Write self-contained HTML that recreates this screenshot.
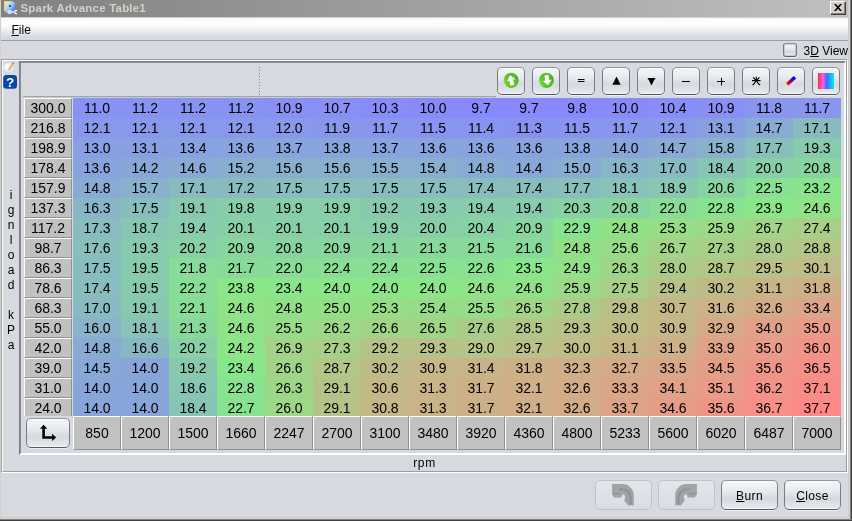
<!DOCTYPE html>
<html lang="en"><head><meta charset="utf-8"><title>Spark Advance Table1</title>
<style>
html,body{margin:0;padding:0}
body{width:852px;height:521px;overflow:hidden;position:relative;background:#d6d9df;font-family:"Liberation Sans",sans-serif;color:#000}
#root{position:absolute;left:0;top:0;width:852px;height:521px;will-change:transform}
.abs{position:absolute}
#frameL{left:0;top:0;width:1px;height:521px;background:#d4d0c8}
#frameR{left:848px;top:0;width:4px;height:519px;background:linear-gradient(90deg,#d4d0c8 0,#d4d0c8 2px,#808080 2px,#808080 3px,#404040 3px)}
#frameB{left:0;top:517px;width:852px;height:4px;background:linear-gradient(180deg,#d4d0c8 0,#d4d0c8 2px,#808080 2px,#808080 3px,#404040 3px)}
#title{left:1px;top:0;width:847px;height:17px;background:linear-gradient(90deg,#808080,#c0c0c0)}
#titleline{left:1px;top:17px;width:847px;height:1px;background:#d4d0c8}
#title .txt{position:absolute;left:19.5px;top:0;height:16px;line-height:16px;font-size:11.5px;letter-spacing:.2px;font-weight:bold;color:#d4d0c8;white-space:nowrap}
#closebtn{left:830px;top:1px;width:16px;height:14px;background:#d4d0c8;box-sizing:border-box;border:1px solid;border-color:#fff #404040 #404040 #fff;box-shadow:inset -1px -1px 0 #808080}
#menu{left:1px;top:18px;width:847px;height:22px;background:linear-gradient(180deg,#f6f7f9 0,#fefefe 18%,#fcfcfd 32%,#eeeff2 55%,#e0e2e7 72%,#d7dae1 86%,#d5d8e0 100%)}
#menuline{left:1px;top:40px;width:847px;height:1px;background:#9aa0ad}
#menu .txt{position:absolute;left:10.5px;top:0;height:23px;line-height:24px;font-size:12px}
u{text-decoration:underline;text-underline-offset:1px}
#cb{left:783px;top:43px;width:14px;height:14px;box-sizing:border-box;border:1px solid;border-color:#8b909b #747984 #595d67 #747984;border-radius:3px;background:linear-gradient(180deg,#f5f6f8 0,#eceef1 25%,#e3e5ea 44%,#d9dce2 56%,#d7dae0 66%,#e0e3e8 86%,#ecedf1 100%);box-shadow:inset 0 0 0 .5px rgba(120,125,136,.55),0 1px 0 rgba(255,255,255,.5)}
#cbtxt{left:803.5px;top:43px;height:16px;line-height:16px;font-size:12px;white-space:nowrap}
#outer{left:1px;top:59px;width:847px;height:414px;box-sizing:border-box;border:1px solid;border-color:#9a9da3 #fff #fff #9a9da3}
#outer:before{content:"";position:absolute;left:0;top:0;right:0;bottom:0;border:1px solid;border-color:#fff #9a9da3 #9a9da3 #fff}
#inner{left:19px;top:61px;width:827px;height:394px;box-sizing:border-box;border:1px solid;border-color:#7b7d81 #fff #fff #7b7d81}
#inner:before{content:"";position:absolute;left:0;top:0;right:0;bottom:0;border:1px solid;border-color:#8c8e93 #fbfbfc #fbfbfc #8c8e93}
.vtxt{left:4px;top:188px;width:14px;font-size:12px;line-height:15px;text-align:center}
.vtxt span{display:block;height:15px}
#sepline{left:23px;top:96px;width:473px;height:1px;background:#a2a4a9}
#sepline2{left:23px;top:97px;width:473px;height:1px;background:#c8cbd1}
#dots{left:259px;top:67px;width:1px;height:29px;background:repeating-linear-gradient(180deg,#83858c 0,#83858c 1px,transparent 1px,transparent 3px)}
.tb{position:absolute;top:67px;width:28px;height:28px;box-sizing:border-box;border:1px solid;border-color:#9196a0 #787c86 #555962 #787c86;border-radius:5px;background:linear-gradient(180deg,#f5f6f8 0,#eceef1 25%,#e3e5ea 44%,#d9dce2 56%,#d7dae0 66%,#e0e3e8 86%,#ecedf1 100%);box-shadow:0 1px 0 rgba(255,255,255,.55),inset 0 -1px 0 rgba(255,255,255,.45),inset 0 1px 0 rgba(255,255,255,.5)}
.tb svg{position:absolute;left:0;top:0}
.btn{position:absolute;top:480px;width:57px;height:30px;box-sizing:border-box;border:1px solid;border-color:#9196a0 #787c86 #555962 #787c86;border-radius:5px;background:linear-gradient(180deg,#f5f6f8 0,#eceef1 25%,#e3e5ea 44%,#d9dce2 56%,#d7dae0 66%,#e0e3e8 86%,#ecedf1 100%);font-size:12px;letter-spacing:.4px;line-height:30px;text-align:center;box-shadow:0 1px 0 rgba(255,255,255,.55),inset 0 -1px 0 rgba(255,255,255,.45),inset 0 1px 0 rgba(255,255,255,.5)}
.btn.dis{border-color:#c0c3ca;background:linear-gradient(180deg,#e4e6eb,#d9dce2);box-shadow:none}
.btn svg{position:absolute;left:0;top:0}
.rowhdrs{position:absolute;left:24px;top:98px;width:48px;height:318px;overflow:hidden}
.rh{position:absolute;left:0;width:48px;height:20px;box-sizing:border-box;border:1px solid;border-color:#fff #909090 #909090 #fff;background:#c1c1c1;font-size:14px;line-height:18px;text-align:center}
.grid{position:absolute;left:73px;top:98px;width:768px;height:318px;overflow:hidden}
.gr{height:20px;white-space:nowrap;font-size:0}
.gr span{display:inline-block;width:48px;height:20px;line-height:20px;font-size:14px;text-align:center}
.colhdrs{position:absolute;left:73px;top:416px;width:768px;height:34px;white-space:nowrap;font-size:0}
.ch{display:inline-block;width:48px;height:34px;box-sizing:border-box;border:1px solid;border-color:#fff #909090 #909090 #fff;background:#c1c1c1;font-size:14px;line-height:32px;text-align:center}
#rpm{left:1px;top:456px;width:847px;height:15px;line-height:15px;font-size:12px;letter-spacing:.6px;text-align:center}
#cornerbtn{left:26px;top:418px;width:44px;height:30px}
</style></head>
<body>
<div id="root">
<div id="title" class="abs">
<svg class="abs" style="left:-1px;top:0" width="20" height="17" viewBox="0 0 20 17">
<defs><linearGradient id="ig" x1="0" y1="0" x2="1" y2="1"><stop offset="0" stop-color="#e4f1ff"/><stop offset=".45" stop-color="#9ccaf8"/><stop offset="1" stop-color="#1c6fd6"/></linearGradient>
<linearGradient id="yg" x1="0" y1="0" x2="1" y2="0"><stop offset="0" stop-color="#f2cf62"/><stop offset=".5" stop-color="#f3e6b4"/><stop offset="1" stop-color="#e9e3cf"/></linearGradient></defs>
<rect x="4" y="1" width="8.300" height="10" fill="url(#yg)"/>
<rect x="4" y="1" width="8.300" height="1" fill="#f0d27a"/>
<rect x="5.600" y="2.200" width="9.200" height="11" fill="url(#ig)"/>
<rect x="9" y="5" width="2" height="2" fill="#1858c0"/>
<path d="M9.200 12.100h6M17 10.600h-1.600l-1 1.500 1 1.500h1.600" stroke="#f4f6f9" stroke-width="1.300" fill="none"/>
<circle cx="9.600" cy="12.100" r="1.500" fill="none" stroke="#e6eaf0" stroke-width="1.200"/>
</svg>
<div class="txt">Spark Advance Table1</div>
</div>
<div id="titleline" class="abs"></div>
<div id="closebtn" class="abs"><svg width="14" height="12" viewBox="0 0 14 12" style="position:absolute;left:0;top:0"><path d="M3 2h2l6 7h-2zM9 2h2l-6 7h-2z" fill="#000"/></svg></div>
<div id="menu" class="abs"><div class="txt"><u>F</u>ile</div></div>
<div id="menuline" class="abs"></div>
<div id="cb" class="abs"></div>
<div id="cbtxt" class="abs">3<u>D</u> View</div>
<div id="outer" class="abs"></div>
<div id="inner" class="abs"></div>
<svg class="abs" style="left:0;top:56px" width="19" height="36" viewBox="0 0 19 36">
<defs><radialGradient id="bg1" cx=".4" cy=".35" r=".7"><stop offset="0" stop-color="#fff"/><stop offset="1" stop-color="#d4e6f2"/></radialGradient></defs>
<ellipse cx="8.800" cy="11.600" rx="5.400" ry="4.500" fill="url(#bg1)"/>
<path d="M9.500 15.500l2.500 1.600-.3-2.600z" fill="#dceaf4"/>
<path d="M9 13.600l3.600-5.200" stroke="#f0aa52" stroke-width="1.900"/>
<path d="M8.500 14.300l.5-1 .6.500z" fill="#8a7a60"/>
<path d="M12.800 8l.8-1.200" stroke="#e8505e" stroke-width="1.600"/>
<rect x="3.200" y="19" width="13.800" height="13.700" rx="3.300" fill="#0848a4"/>
<text x="10.100" y="30.800" font-family="Liberation Sans, sans-serif" font-weight="bold" font-size="13.500" fill="#f4fffb" text-anchor="middle">?</text>
</svg>
<div class="abs vtxt"><span>i</span><span>g</span><span>n</span><span>l</span><span>o</span><span>a</span><span>d</span><span>&nbsp;</span><span>k</span><span>P</span><span>a</span></div>
<div id="sepline" class="abs"></div>
<div id="sepline2" class="abs"></div>
<div id="dots" class="abs"></div>
<div class="tb" style="left:497px"><svg width="26" height="26" viewBox="0 0 26 26"><defs><linearGradient id="gg" x1="0" y1=".7" x2="1" y2=".3"><stop offset="0" stop-color="#b4f08c"/><stop offset=".13" stop-color="#74d242"/><stop offset=".3" stop-color="#5cc62e"/><stop offset=".8" stop-color="#54be28"/><stop offset="1" stop-color="#3c9a18"/></linearGradient></defs><circle cx="13.100" cy="12.400" r="7.600" fill="url(#gg)"/><path transform="rotate(-14 13.300 12.400)" d="M13.300 7.200l4.400 5h-2.400v5.200h-4v-5.200h-2.400z" fill="#fff"/></svg></div>
<div class="tb" style="left:532px"><svg width="26" height="26" viewBox="0 0 26 26"><circle cx="13.300" cy="12.400" r="7.600" fill="url(#gg)"/><path transform="rotate(-8 14.200 12.400)" d="M14.200 17.400l4.500-5h-2.500v-5.200h-4v5.200h-2.500z" fill="#fff"/></svg></div>
<div class="tb" style="left:567px"><svg width="26" height="26" viewBox="0 0 26 26"><path d="M10 11.500h6.500M10 13.500h6.500" stroke="#000" stroke-width="1"/></svg></div>
<div class="tb" style="left:602px"><svg width="26" height="26" viewBox="0 0 26 26"><path d="M13.500 8.600l4.100 8.200h-8.200z" fill="#000"/></svg></div>
<div class="tb" style="left:637px"><svg width="26" height="26" viewBox="0 0 26 26"><path d="M9.800 10h7.400v1.500h-.8l-2.600 5.500h-.6l-2.600-5.500h-.8z" fill="#000"/></svg></div>
<div class="tb" style="left:672px"><svg width="26" height="26" viewBox="0 0 26 26"><path d="M9 13.500h8" stroke="#000" stroke-width="1"/></svg></div>
<div class="tb" style="left:707px"><svg width="26" height="26" viewBox="0 0 26 26"><path d="M9 13.500h8M13.500 9.800v7.700" stroke="#000" stroke-width="1"/></svg></div>
<div class="tb" style="left:742px"><svg width="26" height="26" viewBox="0 0 26 26"><path d="M13.300 8.800v4M9 12.600h8.500M10.200 9.300l3.100 3.500 3.100-3.500M13.300 12.600c-1 2-2.200 3.600-3.800 4.300M13.300 12.600c1 2 2.200 3.600 3.800 4.300" stroke="#000" stroke-width="1.100" fill="none"/></svg></div>
<div class="tb" style="left:777px"><svg width="26" height="26" viewBox="0 0 26 26"><defs><linearGradient id="pg" x1="0" y1="1" x2="1" y2="0"><stop offset="0" stop-color="#f00"/><stop offset=".2" stop-color="#f00"/><stop offset=".35" stop-color="#a0005c"/><stop offset=".65" stop-color="#5000b0"/><stop offset=".8" stop-color="#00f"/><stop offset="1" stop-color="#00f"/></linearGradient></defs><path d="M9.300 16.200l7.700-7" stroke="url(#pg)" stroke-width="3.400"/></svg></div>
<div class="tb" style="left:812px"><svg width="26" height="26" viewBox="0 0 26 26"><defs><linearGradient id="cg" x1="0" y1="0" x2="1" y2="0"><stop offset="0" stop-color="#ff2838"/><stop offset=".3" stop-color="#ff5fe6"/><stop offset=".55" stop-color="#3a6cff"/><stop offset="1" stop-color="#00f2ee"/></linearGradient></defs><rect x="5" y="5" width="16" height="16" fill="url(#cg)"/></svg></div>
<div class="rowhdrs"><div class="rh" style="top:0px">300.0</div><div class="rh" style="top:20px">216.8</div><div class="rh" style="top:40px">198.9</div><div class="rh" style="top:60px">178.4</div><div class="rh" style="top:80px">157.9</div><div class="rh" style="top:100px">137.3</div><div class="rh" style="top:120px">117.2</div><div class="rh" style="top:140px">98.7</div><div class="rh" style="top:160px">86.3</div><div class="rh" style="top:180px">78.6</div><div class="rh" style="top:200px">68.3</div><div class="rh" style="top:220px">55.0</div><div class="rh" style="top:240px">42.0</div><div class="rh" style="top:260px">39.0</div><div class="rh" style="top:280px">31.0</div><div class="rh" style="top:300px">24.0</div></div>
<div class="grid"><div class="gr"><span style="background:#8891f4">11.0</span><span style="background:#8892f2">11.2</span><span style="background:#8892f2">11.2</span><span style="background:#8892f2">11.2</span><span style="background:#8890f5">10.9</span><span style="background:#888ff6">10.7</span><span style="background:#888cfa">10.3</span><span style="background:#888afc">10.0</span><span style="background:#8888ff">9.7</span><span style="background:#8888ff">9.7</span><span style="background:#8889fe">9.8</span><span style="background:#888afc">10.0</span><span style="background:#888df9">10.4</span><span style="background:#8890f5">10.9</span><span style="background:#8896ed">11.8</span><span style="background:#8896ee">11.7</span></div>
<div class="gr"><span style="background:#8898eb">12.1</span><span style="background:#8898eb">12.1</span><span style="background:#8898eb">12.1</span><span style="background:#8898eb">12.1</span><span style="background:#8898eb">12.0</span><span style="background:#8897ec">11.9</span><span style="background:#8896ee">11.7</span><span style="background:#8894f0">11.5</span><span style="background:#8894f1">11.4</span><span style="background:#8893f1">11.3</span><span style="background:#8894f0">11.5</span><span style="background:#8896ee">11.7</span><span style="background:#8898eb">12.1</span><span style="background:#889fe2">13.1</span><span style="background:#88aad4">14.7</span><span style="background:#88bbc0">17.1</span></div>
<div class="gr"><span style="background:#889fe3">13.0</span><span style="background:#889fe2">13.1</span><span style="background:#88a1e0">13.4</span><span style="background:#88a3de">13.6</span><span style="background:#88a3dd">13.7</span><span style="background:#88a4dc">13.8</span><span style="background:#88a3dd">13.7</span><span style="background:#88a3de">13.6</span><span style="background:#88a3de">13.6</span><span style="background:#88a3de">13.6</span><span style="background:#88a4dc">13.8</span><span style="background:#88a5da">14.0</span><span style="background:#88aad4">14.7</span><span style="background:#88b2cb">15.8</span><span style="background:#88bfbb">17.7</span><span style="background:#88caad">19.3</span></div>
<div class="gr"><span style="background:#88a3de">13.6</span><span style="background:#88a7d9">14.2</span><span style="background:#88aad5">14.6</span><span style="background:#88aed0">15.2</span><span style="background:#88b0cd">15.6</span><span style="background:#88b0cd">15.6</span><span style="background:#88b0ce">15.5</span><span style="background:#88afcf">15.4</span><span style="background:#88abd4">14.8</span><span style="background:#88a8d7">14.4</span><span style="background:#88acd2">15.0</span><span style="background:#88b5c7">16.3</span><span style="background:#88bac1">17.0</span><span style="background:#88c4b5">18.4</span><span style="background:#88cfa7">20.0</span><span style="background:#88d4a1">20.8</span></div>
<div class="gr"><span style="background:#88abd4">14.8</span><span style="background:#88b1cc">15.7</span><span style="background:#88bbc0">17.1</span><span style="background:#88bbbf">17.2</span><span style="background:#88bdbd">17.5</span><span style="background:#88bdbd">17.5</span><span style="background:#88bdbd">17.5</span><span style="background:#88bdbd">17.5</span><span style="background:#88bdbe">17.4</span><span style="background:#88bdbe">17.4</span><span style="background:#88bfbb">17.7</span><span style="background:#88c2b8">18.1</span><span style="background:#88c7b1">18.9</span><span style="background:#88d3a2">20.6</span><span style="background:#88e092">22.5</span><span style="background:#88e58c">23.2</span></div>
<div class="gr"><span style="background:#88b5c7">16.3</span><span style="background:#88bdbd">17.5</span><span style="background:#88c8af">19.1</span><span style="background:#88cda9">19.8</span><span style="background:#88cea8">19.9</span><span style="background:#88cea8">19.9</span><span style="background:#88c9ae">19.2</span><span style="background:#88caad">19.3</span><span style="background:#88cbad">19.4</span><span style="background:#88cbad">19.4</span><span style="background:#88d1a5">20.3</span><span style="background:#88d4a1">20.8</span><span style="background:#88dc96">22.0</span><span style="background:#88e290">22.8</span><span style="background:#8ae788">23.9</span><span style="background:#90e288">24.6</span></div>
<div class="gr"><span style="background:#88bcbe">17.3</span><span style="background:#88c6b2">18.7</span><span style="background:#88cbad">19.4</span><span style="background:#88cfa7">20.1</span><span style="background:#88cfa7">20.1</span><span style="background:#88cfa7">20.1</span><span style="background:#88cea8">19.9</span><span style="background:#88cfa7">20.0</span><span style="background:#88d1a4">20.4</span><span style="background:#88d5a0">20.9</span><span style="background:#88e38f">22.9</span><span style="background:#91e088">24.8</span><span style="background:#96dd88">25.3</span><span style="background:#9bd988">25.9</span><span style="background:#a2d388">26.7</span><span style="background:#a7cf88">27.4</span></div>
<div class="gr"><span style="background:#88bebc">17.6</span><span style="background:#88caad">19.3</span><span style="background:#88d0a6">20.2</span><span style="background:#88d5a0">20.9</span><span style="background:#88d4a1">20.8</span><span style="background:#88d5a0">20.9</span><span style="background:#88d69e">21.1</span><span style="background:#88d89c">21.3</span><span style="background:#88d99b">21.5</span><span style="background:#88da9a">21.6</span><span style="background:#91e088">24.8</span><span style="background:#98db88">25.6</span><span style="background:#a2d388">26.7</span><span style="background:#a7cf88">27.3</span><span style="background:#adcb88">28.0</span><span style="background:#b3c588">28.8</span></div>
<div class="gr"><span style="background:#88bdbd">17.5</span><span style="background:#88cbac">19.5</span><span style="background:#88db98">21.8</span><span style="background:#88da99">21.7</span><span style="background:#88dc96">22.0</span><span style="background:#88df93">22.4</span><span style="background:#88df93">22.4</span><span style="background:#88e092">22.5</span><span style="background:#88e091">22.6</span><span style="background:#88e78a">23.5</span><span style="background:#92e088">24.9</span><span style="background:#9ed688">26.3</span><span style="background:#adcb88">28.0</span><span style="background:#b2c688">28.7</span><span style="background:#b9c088">29.5</span><span style="background:#bebc88">30.1</span></div>
<div class="gr"><span style="background:#88bdbe">17.4</span><span style="background:#88cbac">19.5</span><span style="background:#88de95">22.2</span><span style="background:#89e788">23.8</span><span style="background:#88e68b">23.4</span><span style="background:#8be688">24.0</span><span style="background:#8be688">24.0</span><span style="background:#8be688">24.0</span><span style="background:#90e288">24.6</span><span style="background:#90e288">24.6</span><span style="background:#9bd988">25.9</span><span style="background:#a8ce88">27.5</span><span style="background:#b8c188">29.4</span><span style="background:#bfbb88">30.2</span><span style="background:#c7b588">31.1</span><span style="background:#cdb088">31.8</span></div>
<div class="gr"><span style="background:#88bac1">17.0</span><span style="background:#88c8af">19.1</span><span style="background:#88dd96">22.1</span><span style="background:#90e288">24.6</span><span style="background:#91e088">24.8</span><span style="background:#93df88">25.0</span><span style="background:#96dd88">25.3</span><span style="background:#96dc88">25.4</span><span style="background:#97dc88">25.5</span><span style="background:#a0d588">26.5</span><span style="background:#abcc88">27.8</span><span style="background:#bcbe88">29.8</span><span style="background:#c3b888">30.7</span><span style="background:#cbb288">31.6</span><span style="background:#d4ab88">32.6</span><span style="background:#daa588">33.4</span></div>
<div class="gr"><span style="background:#88b3c9">16.0</span><span style="background:#88c2b8">18.1</span><span style="background:#88d89c">21.3</span><span style="background:#90e288">24.6</span><span style="background:#97dc88">25.5</span><span style="background:#9dd788">26.2</span><span style="background:#a1d488">26.6</span><span style="background:#a0d588">26.5</span><span style="background:#a9cd88">27.6</span><span style="background:#b1c788">28.5</span><span style="background:#b8c288">29.3</span><span style="background:#bebd88">30.0</span><span style="background:#c5b788">30.9</span><span style="background:#d6a988">32.9</span><span style="background:#e0a188">34.0</span><span style="background:#e89b88">35.0</span></div>
<div class="gr"><span style="background:#88abd4">14.8</span><span style="background:#88b7c4">16.6</span><span style="background:#88d0a6">20.2</span><span style="background:#8ce588">24.2</span><span style="background:#a3d288">26.9</span><span style="background:#a7cf88">27.3</span><span style="background:#b7c288">29.2</span><span style="background:#b8c288">29.3</span><span style="background:#b5c488">29.0</span><span style="background:#bbbf88">29.7</span><span style="background:#bebd88">30.0</span><span style="background:#c7b588">31.1</span><span style="background:#ceb088">31.9</span><span style="background:#dfa288">33.9</span><span style="background:#e89b88">35.0</span><span style="background:#f19488">36.0</span></div>
<div class="gr"><span style="background:#88a9d6">14.5</span><span style="background:#88a5da">14.0</span><span style="background:#88c9ae">19.2</span><span style="background:#88e68b">23.4</span><span style="background:#a1d488">26.6</span><span style="background:#b2c688">28.7</span><span style="background:#bfbb88">30.2</span><span style="background:#c5b788">30.9</span><span style="background:#c9b388">31.4</span><span style="background:#cdb088">31.8</span><span style="background:#d1ad88">32.3</span><span style="background:#d4aa88">32.7</span><span style="background:#dba588">33.5</span><span style="background:#e49e88">34.5</span><span style="background:#ed9688">35.6</span><span style="background:#f59088">36.5</span></div>
<div class="gr"><span style="background:#88a5da">14.0</span><span style="background:#88a5da">14.0</span><span style="background:#88c5b3">18.6</span><span style="background:#88e290">22.8</span><span style="background:#9ed688">26.3</span><span style="background:#b6c388">29.1</span><span style="background:#c3b988">30.6</span><span style="background:#c9b488">31.3</span><span style="background:#ccb188">31.7</span><span style="background:#cfae88">32.1</span><span style="background:#d4ab88">32.6</span><span style="background:#daa688">33.3</span><span style="background:#e0a188">34.1</span><span style="background:#e99a88">35.1</span><span style="background:#f29288">36.2</span><span style="background:#fa8c88">37.1</span></div>
<div class="gr"><span style="background:#88a5da">14.0</span><span style="background:#88a5da">14.0</span><span style="background:#88c4b5">18.4</span><span style="background:#88e190">22.7</span><span style="background:#9cd888">26.0</span><span style="background:#b6c388">29.1</span><span style="background:#c4b788">30.8</span><span style="background:#c9b488">31.3</span><span style="background:#ccb188">31.7</span><span style="background:#cfae88">32.1</span><span style="background:#d4ab88">32.6</span><span style="background:#dda388">33.7</span><span style="background:#e59d88">34.6</span><span style="background:#ed9688">35.6</span><span style="background:#f68f88">36.7</span><span style="background:#ff8888">37.7</span></div>
</div>
<div class="colhdrs"><div class="ch">850</div><div class="ch">1200</div><div class="ch">1500</div><div class="ch">1660</div><div class="ch">2247</div><div class="ch">2700</div><div class="ch">3100</div><div class="ch">3480</div><div class="ch">3920</div><div class="ch">4360</div><div class="ch">4800</div><div class="ch">5233</div><div class="ch">5600</div><div class="ch">6020</div><div class="ch">6487</div><div class="ch">7000</div></div>

<div class="tb" id="cornerbtn"><svg width="42" height="28" viewBox="0 0 42 28"><path d="M16.600 9v9.500h9" stroke="#000" stroke-width="2.600" fill="none"/><path d="M16.600 5.800l3.700 4h-7.400zM29.100 18.400l-4 3.600v-7.200z" fill="#000"/></svg></div>
<div id="rpm" class="abs">rpm</div>
<div class="btn dis" style="left:595px"><svg width="55" height="28" viewBox="0 0 55 28"><path d="M16.1 3L27 3C32 3 37.8 8 37.8 13.4L37.8 24.6L32.2 24.6L28.2 19.4L29.3 16.3L28.2 13.4L26.5 13.4L25.3 16.5L18.1 16.6L16.1 13.4Z" fill="#a2a3a6"/><path d="M23 8.5L27.5 8.5C31.5 8.5 34.6 13 34.6 17L34.6 23" stroke="#919295" stroke-width="2.200" fill="none"/><path d="M16.5 12.6L23.8 12.6" stroke="#919295" stroke-width="1.400" fill="none"/></svg></div>
<div class="btn dis" style="left:658px"><svg width="55" height="28" viewBox="0 0 55 28"><path d="M37.9 3 L27 3 C22 3 16.2 8 16.2 13.4 L16.2 24.6 L21.8 24.6 L25.8 19.4 L24.7 16.3 L25.8 13.4 L27.5 13.4 L28.7 16.5 L35.9 16.6 L37.9 13.4 Z" fill="#a2a3a6"/><path d="M31 8.5 L26.5 8.5 C22.5 8.5 19.4 13 19.4 17 L19.4 23" stroke="#919295" stroke-width="2.200" fill="none"/><path d="M37.5 12.6 L30.2 12.6" stroke="#919295" stroke-width="1.400" fill="none"/></svg></div>
<div class="btn" style="left:721px"><u>B</u>urn</div>
<div class="btn" style="left:784px"><u>C</u>lose</div>
<div id="frameL" class="abs"></div>
<div id="frameB" class="abs"></div>
<div id="frameR" class="abs"></div>
</div>
</body></html>
